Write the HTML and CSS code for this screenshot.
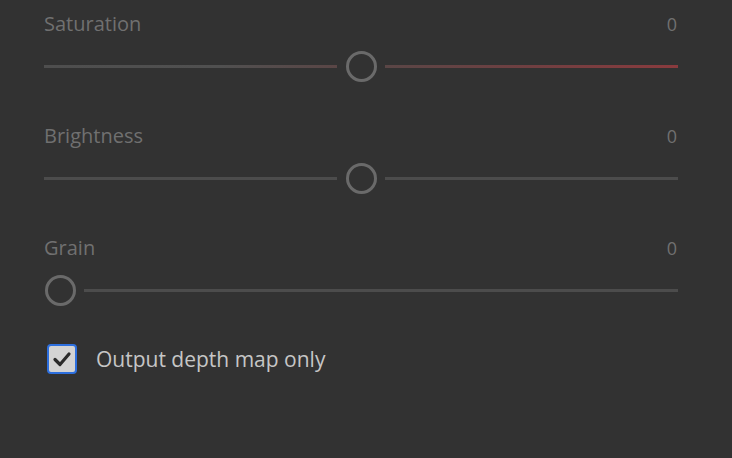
FILE: index.html
```html
<!DOCTYPE html>
<html lang="en">
<head>
    <meta charset="UTF-8">
    <title>Adjustments</title>
    <link rel="stylesheet" href="styles.css">
</head>
<body>
    <div class="panel">
        <div class="slider-group">
            <div class="slider-head">
                <span class="label">Saturation</span>
                <span class="value">0</span>
            </div>
            <div class="slider">
                <div class="track track-sat-left"></div>
                <div class="thumb"></div>
                <div class="track track-sat-right"></div>
            </div>
        </div>
        <div class="slider-group">
            <div class="slider-head">
                <span class="label">Brightness</span>
                <span class="value">0</span>
            </div>
            <div class="slider">
                <div class="track"></div>
                <div class="thumb"></div>
                <div class="track"></div>
            </div>
        </div>
        <div class="slider-group">
            <div class="slider-head">
                <span class="label">Grain</span>
                <span class="value">0</span>
            </div>
            <div class="slider slider-min">
                <div class="thumb"></div>
                <div class="track"></div>
            </div>
        </div>
        <label class="check-row">
            <span class="checkbox">
                <svg width="20" height="18" viewBox="0 0 20 18">
                    <path d="M3 9.5 L8 14.5 L17 4" fill="none" stroke="#2b2b2b" stroke-width="3.2" stroke-linecap="round" stroke-linejoin="round"/>
                </svg>
            </span>
            <span class="check-text">Output depth map only</span>
        </label>
    </div>
</body>
</html>
```
FILE: styles.css
```css
body {
    margin: 0;
    background-color: #323232;
    font-family: 'Open Sans', 'Noto Sans', sans-serif;
    height: 458px;
    overflow: hidden;
}
.panel {
    padding: 12px 54px 0 44px;
}
.slider-group {
    height: 112px;
}
.slider-head {
    display: flex;
    justify-content: space-between;
    align-items: baseline;
    height: 24px;
    line-height: 24px;
}
.label {
    font-size: 20px;
    color: #707070;
}
.value {
    font-size: 18px;
    color: #707070;
    margin-right: 1px;
}
.slider {
    display: flex;
    align-items: center;
    height: 30px;
    margin-top: 15px;
}
.track {
    flex: 1;
    height: 3px;
    background-color: #4c4c4c;
}
.track-sat-left {
    background: linear-gradient(to right, #4e4e4e 0%, #505050 60%, #5a4646 100%);
}
.track-sat-right {
    background: linear-gradient(to right, #5a4646 0%, #703f41 50%, #8a3b3e 100%);
}
.thumb {
    box-sizing: border-box;
    width: 31px;
    height: 31px;
    border: 3px solid #6a6a6a;
    border-radius: 50%;
    margin: 0 8px 0 9px;
}
.slider-min .thumb {
    margin: 0 8px 0 1px;
}
.check-row {
    display: flex;
    align-items: center;
    margin-top: -4px;
    padding-left: 3px;
}
.checkbox {
    box-sizing: border-box;
    width: 30px;
    height: 30px;
    border: 2px solid #2d6fde;
    border-radius: 4px;
    background-color: #d3d3d3;
    display: flex;
    align-items: center;
    justify-content: center;
}
.check-text {
    margin-left: 19px;
    font-size: 21px;
    color: #c6c6c6;
}
```
